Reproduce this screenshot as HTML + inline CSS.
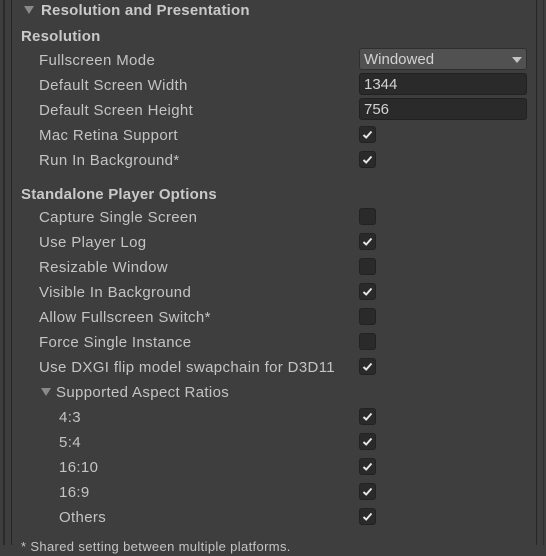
<!DOCTYPE html>
<html><head><style>
html,body{margin:0;padding:0}
body{width:546px;height:545px;background:#3e3e3e;overflow:hidden;position:relative;font-family:"Liberation Sans",sans-serif;font-size:15px;color:#c4c4c4;}
.t{position:absolute;white-space:nowrap;line-height:18px;letter-spacing:0.35px}
.b{font-weight:bold;color:#c9c9c9;letter-spacing:0.2px}
.cb{position:absolute;left:359px;width:15px;height:15px;background:#2a2a2a;border:1px solid #222;border-radius:3px}
.cb svg{position:absolute;left:2px;top:2px}
.f{position:absolute;left:359px;width:166px;height:20px;background:#2a2a2a;border:1px solid #212121;border-radius:3px;}
.f span{position:absolute;left:4px;top:2px;line-height:18px;color:#d2d2d2}
.line{position:absolute;top:0;height:545px;width:1px;background:#262626}
.tri{position:absolute;width:0;height:0;border-left:5px solid transparent;border-right:5px solid transparent;border-top:8px solid #8a8a8a}
</style></head><body>
<div class="line" style="left:3px;width:2px;background:#2a2a2a"></div>
<div class="line" style="left:11px"></div>
<div class="line" style="left:536px"></div>
<div class="line" style="left:543px;background:#2e2e2e"></div>
<div class="tri" style="left:24px;top:6px"></div>
<div class="t b" style="left:41px;top:2px">Resolution and Presentation</div>
<div class="t b" style="left:21px;top:28px">Resolution</div>
<div class="t" style="left:39px;top:52px">Fullscreen Mode</div>
<div class="t" style="left:39px;top:77px">Default Screen Width</div>
<div class="t" style="left:39px;top:102px">Default Screen Height</div>
<div class="t" style="left:39px;top:127px">Mac Retina Support</div>
<div class="t" style="left:39px;top:152px">Run In Background*</div>
<div class="f" style="top:48px;background:#515151;border-color:#2f2f2f"><span>Windowed</span><div class="tri" style="left:152px;top:8px;border-top-color:#c4c4c4;border-top-width:6px"></div></div>
<div class="f" style="top:73px"><span>1344</span></div>
<div class="f" style="top:98px"><span>756</span></div>
<div class="t b" style="left:21px;top:186px">Standalone Player Options</div>
<div class="t" style="left:39px;top:209px">Capture Single Screen</div>
<div class="t" style="left:39px;top:234px">Use Player Log</div>
<div class="t" style="left:39px;top:259px">Resizable Window</div>
<div class="t" style="left:39px;top:284px">Visible In Background</div>
<div class="t" style="left:39px;top:309px">Allow Fullscreen Switch*</div>
<div class="t" style="left:39px;top:334px">Force Single Instance</div>
<div class="t" style="left:39px;top:359px">Use DXGI flip model swapchain for D3D11</div>
<div class="tri" style="left:41px;top:388px"></div>
<div class="t" style="left:56px;top:384px">Supported Aspect Ratios</div>
<div class="t" style="left:59px;top:409px">4:3</div>
<div class="t" style="left:59px;top:434px">5:4</div>
<div class="t" style="left:59px;top:459px">16:10</div>
<div class="t" style="left:59px;top:484px">16:9</div>
<div class="t" style="left:59px;top:509px">Others</div>
<div class="t" style="left:21px;top:538px;font-size:13px">* Shared setting between multiple platforms.</div>
<div class="cb" style="top:126px"><svg width="11" height="11" viewBox="0 0 11 11"><path d="M1.5 6 L4.2 8.5 L9.5 2.5" stroke="#e8e8e8" stroke-width="1.9" fill="none"/></svg></div>
<div class="cb" style="top:151px"><svg width="11" height="11" viewBox="0 0 11 11"><path d="M1.5 6 L4.2 8.5 L9.5 2.5" stroke="#e8e8e8" stroke-width="1.9" fill="none"/></svg></div>
<div class="cb" style="top:208px"></div>
<div class="cb" style="top:233px"><svg width="11" height="11" viewBox="0 0 11 11"><path d="M1.5 6 L4.2 8.5 L9.5 2.5" stroke="#e8e8e8" stroke-width="1.9" fill="none"/></svg></div>
<div class="cb" style="top:258px"></div>
<div class="cb" style="top:283px"><svg width="11" height="11" viewBox="0 0 11 11"><path d="M1.5 6 L4.2 8.5 L9.5 2.5" stroke="#e8e8e8" stroke-width="1.9" fill="none"/></svg></div>
<div class="cb" style="top:308px"></div>
<div class="cb" style="top:333px"></div>
<div class="cb" style="top:358px"><svg width="11" height="11" viewBox="0 0 11 11"><path d="M1.5 6 L4.2 8.5 L9.5 2.5" stroke="#e8e8e8" stroke-width="1.9" fill="none"/></svg></div>
<div class="cb" style="top:408px"><svg width="11" height="11" viewBox="0 0 11 11"><path d="M1.5 6 L4.2 8.5 L9.5 2.5" stroke="#e8e8e8" stroke-width="1.9" fill="none"/></svg></div>
<div class="cb" style="top:433px"><svg width="11" height="11" viewBox="0 0 11 11"><path d="M1.5 6 L4.2 8.5 L9.5 2.5" stroke="#e8e8e8" stroke-width="1.9" fill="none"/></svg></div>
<div class="cb" style="top:458px"><svg width="11" height="11" viewBox="0 0 11 11"><path d="M1.5 6 L4.2 8.5 L9.5 2.5" stroke="#e8e8e8" stroke-width="1.9" fill="none"/></svg></div>
<div class="cb" style="top:483px"><svg width="11" height="11" viewBox="0 0 11 11"><path d="M1.5 6 L4.2 8.5 L9.5 2.5" stroke="#e8e8e8" stroke-width="1.9" fill="none"/></svg></div>
<div class="cb" style="top:508px"><svg width="11" height="11" viewBox="0 0 11 11"><path d="M1.5 6 L4.2 8.5 L9.5 2.5" stroke="#e8e8e8" stroke-width="1.9" fill="none"/></svg></div>
</body></html>
